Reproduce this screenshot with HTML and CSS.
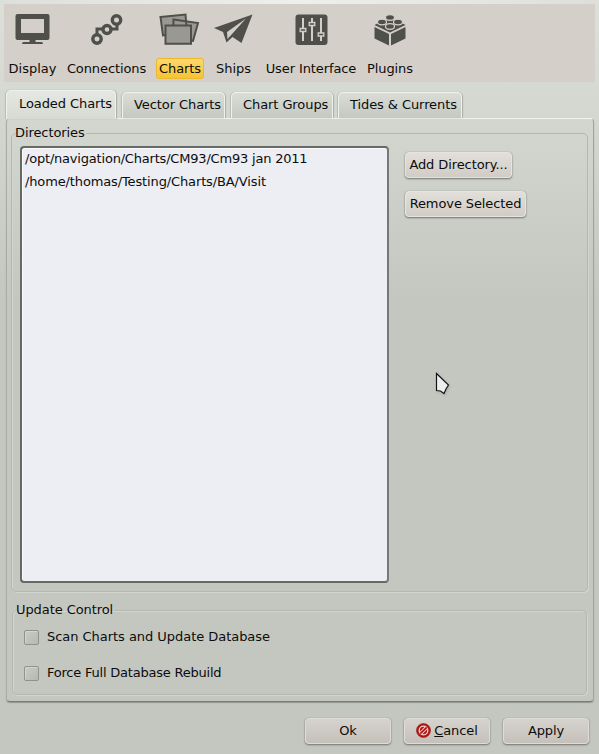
FILE: index.html
```html
<!DOCTYPE html>
<html lang="en">
<head>
<meta charset="utf-8">
<title>Options</title>
<link rel="stylesheet" href="styles.css">
</head>
<body>
<nav class="toolbar">
  <div class="tool display">
    <svg viewBox="0 0 44 40"><path class="ink" fill-rule="evenodd" d="M6.500 6h30q2 0 2 2v22q0 2-2 2h-30q-2 0-2-2V8q0-2 2-2zm3.500 5v14h23V11zM18.500 32h6v2h6q1.500 0 1.500 2H11q0-2 1.500-2h6z"/></svg>
    <span>Display</span>
  </div>
  <div class="tool connections">
    <svg viewBox="0 0 44 40"><path class="line" stroke-width="3" d="M12 27v-6H32v-8"/><g class="ring"><circle cx="12" cy="31" r="4.200"/><circle cx="22" cy="21.500" r="4"/><circle cx="31.500" cy="12" r="4.200"/></g></svg>
    <span>Connections</span>
  </div>
  <div class="tool charts">
    <svg viewBox="0 0 44 40"><g class="map"><path d="M2.500 9 27.500 6.500l1.500 18-24 3zM15.500 11.500l24.500 3.500-5 18-20-3z"/><path d="M7.500 17.500h25.500v18.300H7.500z"/></g></svg>
    <span>Charts</span>
  </div>
  <div class="tool ships">
    <svg viewBox="0 0 44 40"><path class="ink" fill-rule="evenodd" d="M40.500 6.500 2 20l9 4 3.500 10.500 6-5.500 9 6zM15.500 31l-.5-7L34 10.500z"/></svg>
    <span>Ships</span>
  </div>
  <div class="tool interface">
    <svg viewBox="0 0 44 40"><rect class="ink" x="6.500" y="6.500" width="32" height="30.500" rx="3"/><g class="slide"><path d="M14 10v23M23 10v23M32 10v23"/><path class="ink" d="M11.200 20.500h5.600v3h-5.600zM20.200 14.500h5.600v3h-5.600zM29.200 25h5.600v3h-5.600z"/></g></svg>
    <span>User Interface</span>
  </div>
  <div class="tool plugins">
    <svg viewBox="0 0 44 40"><path class="ink" d="M6.500 19 21 26V37.500L6.500 30.500zM37.500 19 23 26V37.500l14.500-7zM22 9l15.500 8L22 24.500 6.500 17z"/><g class="stud"><ellipse cx="22" cy="9.500" rx="4.500" ry="2.800"/><ellipse cx="14" cy="14" rx="4.500" ry="2.800"/><ellipse cx="30" cy="14" rx="4.500" ry="2.800"/><ellipse cx="22" cy="18.500" rx="4.500" ry="2.800"/></g></svg>
    <span>Plugins</span>
  </div>
</nav>
<div class="tabs">
  <div class="tab active">Loaded Charts</div>
  <div class="tab vector">Vector Charts</div>
  <div class="tab groups">Chart Groups</div>
  <div class="tab tides">Tides &amp; Currents</div>
</div>
<main class="pane">
  <fieldset class="group directories">
    <legend>Directories</legend>
    <div class="list"><div class="first">/opt/navigation/Charts/CM93/Cm93 jan 2011</div><div class="second">/home/thomas/Testing/Charts/BA/Visit</div></div>
    <div class="side">
      <button class="add">Add Directory...</button>
      <button class="remove">Remove Selected</button>
    </div>
  </fieldset>
  <fieldset class="group update">
    <legend>Update Control</legend>
    <label><i class="box"></i>Scan Charts and Update Database</label>
    <label class="force"><i class="box"></i>Force Full Database Rebuild</label>
  </fieldset>
</main>
<footer class="actions">
  <button>Ok</button>
  <button><svg class="no" viewBox="0 0 15 15"><circle cx="7.500" cy="7.500" r="7" fill="#b31412" stroke="#8e1a16" stroke-width=".6"/><circle cx="7.500" cy="7.500" r="4.300" fill="none" stroke="#efd6d2" stroke-width="1.300"/><path d="M4.600 10.400 10.400 4.600" stroke="#efd6d2" stroke-width="3.600"/><path d="M4.300 10.700 10.700 4.300" stroke="#b31412" stroke-width="1.700"/></svg><span><u>C</u>ancel</span></button>
  <button>Apply</button>
</footer>
<svg class="cursor" viewBox="0 0 16 24"><path d="M1.500 1.500v17l4 .5 3.500 2.500 2-4.500 2.500-4z"/></svg>
</body>
</html>
```
FILE: styles.css
```css
* { box-sizing: border-box; }
body {
  margin: 0;
  width: 599px;
  height: 754px;
  padding: 4px 4px 0 4px;
  overflow: hidden;
  font: 13px/16px "DejaVu Sans", sans-serif;
  color: #0c0c0c;
  background:
    radial-gradient(ellipse 300px 64px at 50% 0, rgba(255,255,255,.5), rgba(255,255,255,0)),
    linear-gradient(#dde0da 0, #d6dad3 80px, #c4c7bf 300px);
}
.toolbar { display: flex; height: 78px; background: #d4cfc8; }
.tool { display: flex; flex-direction: column; align-items: center; height: 78px; white-space: nowrap; }
.tool svg { width: 44px; height: 40px; margin: 4px 0 10px; flex: none; }
.tool span { height: 21px; padding: 3px 0 0; border-radius: 3px; }
.display { width: 57px; }
.connections { width: 91px; letter-spacing: -.1px; }
.charts { width: 56px; letter-spacing: -.1px; }
.ships { width: 51px; }
.interface { width: 104px; letter-spacing: -.1px; }
.plugins { width: 54px; letter-spacing: -.1px; }
.tool.charts span { width: 48px; text-align: center; padding-top: 2px; border: 1px solid #edb92b; background: linear-gradient(#ffd76c, #f6c333); }
.ink { fill: #50504b; }
.line { fill: none; stroke: #50504b; }
.ring { fill: #d4cfc8; stroke: #50504b; stroke-width: 3.4; }
.map { fill: #999893; stroke: #50504b; stroke-width: 2; }
.slide { fill: none; stroke: #d4cfc8; stroke-width: 2; }
.slide .ink { stroke-width: 1.3; }
.stud { fill: #50504b; stroke: #d4cfc8; stroke-width: 1.2; }
.tabs { display: flex; align-items: flex-end; height: 36px; padding-left: 2px; letter-spacing: -.08px; }
.tab {
  height: 26px;
  padding: 4px 0 0 12px;
  white-space: nowrap;
  border: 1px solid #eff1ec;
  border-bottom: 0;
  border-radius: 5px 5px 0 0;
  background: linear-gradient(#d9ddd6, #c4c8c0);
  box-shadow: 1px 0 1px #a9ada5, -1px 0 1px #b8bcb4;
}
.tab.active { position: relative; width: 110px; height: 29px; margin: 0 6px -1px 0; padding-top: 5px; background: linear-gradient(#e5e8e2, #d6dad2); }
.vector { width: 103px; margin-right: 6px; padding-left: 11px; }
.groups { width: 102px; margin-right: 5px; padding-left: 11px; }
.tides { width: 124px; padding-left: 11px; }
.pane {
  width: 588px;
  height: 584px;
  margin-left: 2px;
  padding: 6px 6px 0 5px;
  border: 1px solid #9fa39b;
  border-top-color: #f0f2ed;
  border-left-color: #a8aca4;
  border-bottom-color: #777d75;
  border-radius: 4px;
  box-shadow: 0 1px 1px #92978f;
}
.group {
  margin: 0;
  padding: 1px;
  min-width: 0;
  border: 1px solid #b3b7af;
  border-radius: 5px;
  box-shadow: inset 1px 1px #d3d6cf, 1px 1px #d3d6cf;
}
legend { height: 16px; margin-left: 2px; padding: 0 1px 0 0; letter-spacing: -.08px; }
.directories { width: 577px; height: 467px; margin-left: -1px; }
.list, .side { float: left; }
.list {
  width: 369px;
  height: 437px;
  margin: 4px 15px 0 7px;
  padding: 0 3px;
  line-height: 22px;
  background: #edeef3;
  border: 2px solid #656966;
  border-right-color: #757976;
  border-radius: 4px;
  box-shadow: inset 1px 1px #fafafb;
}
.first { letter-spacing: -.2px; }
.second { letter-spacing: -.13px; margin-top: 1px; }
.side { display: flex; flex-direction: column; gap: 13px; padding: 10px 0 0 1px; }
button {
  display: flex;
  justify-content: center;
  align-items: center;
  height: 26px;
  padding: 0 0 1px;
  font: inherit;
  color: inherit;
  white-space: nowrap;
  border: 1px solid #e7e4df;
  border-radius: 4px;
  background: linear-gradient(#e2dfda, #d1ccc5);
  box-shadow: 0 1px 2px #71756e, 0 0 1px #8e928b;
}
.side button { letter-spacing: -.1px; }
.add { width: 107px; }
.remove { width: 121px; }
.update { width: 575px; height: 93px; margin-top: 10px; }
.update label { display: flex; align-items: center; height: 16px; margin: 10px 0 20px 10px; gap: 8px; letter-spacing: -.04px; }
.update .force { letter-spacing: -.22px; }
.box { width: 15px; height: 15px; border: 1px solid #8f938c; border-radius: 2px; background: linear-gradient(135deg, #c9ccc5, #b5b9b1); box-shadow: inset 1px 1px #d2d5ce; }
.actions { display: flex; gap: 13px; margin: 16px 0 0 301px; }
.actions button { width: 86px; background: linear-gradient(#d6d3ce, #c5c0b9); border-color: #dfdcd7; letter-spacing: -.1px; }
.no { width: 15px; height: 15px; margin-right: 3px; }
.cursor { position: absolute; left: 435px; top: 372px; width: 16px; height: 24px; fill: #eee; stroke: #151515; stroke-width: 1.2; filter: drop-shadow(1px 1px 1px #8886); }
```
